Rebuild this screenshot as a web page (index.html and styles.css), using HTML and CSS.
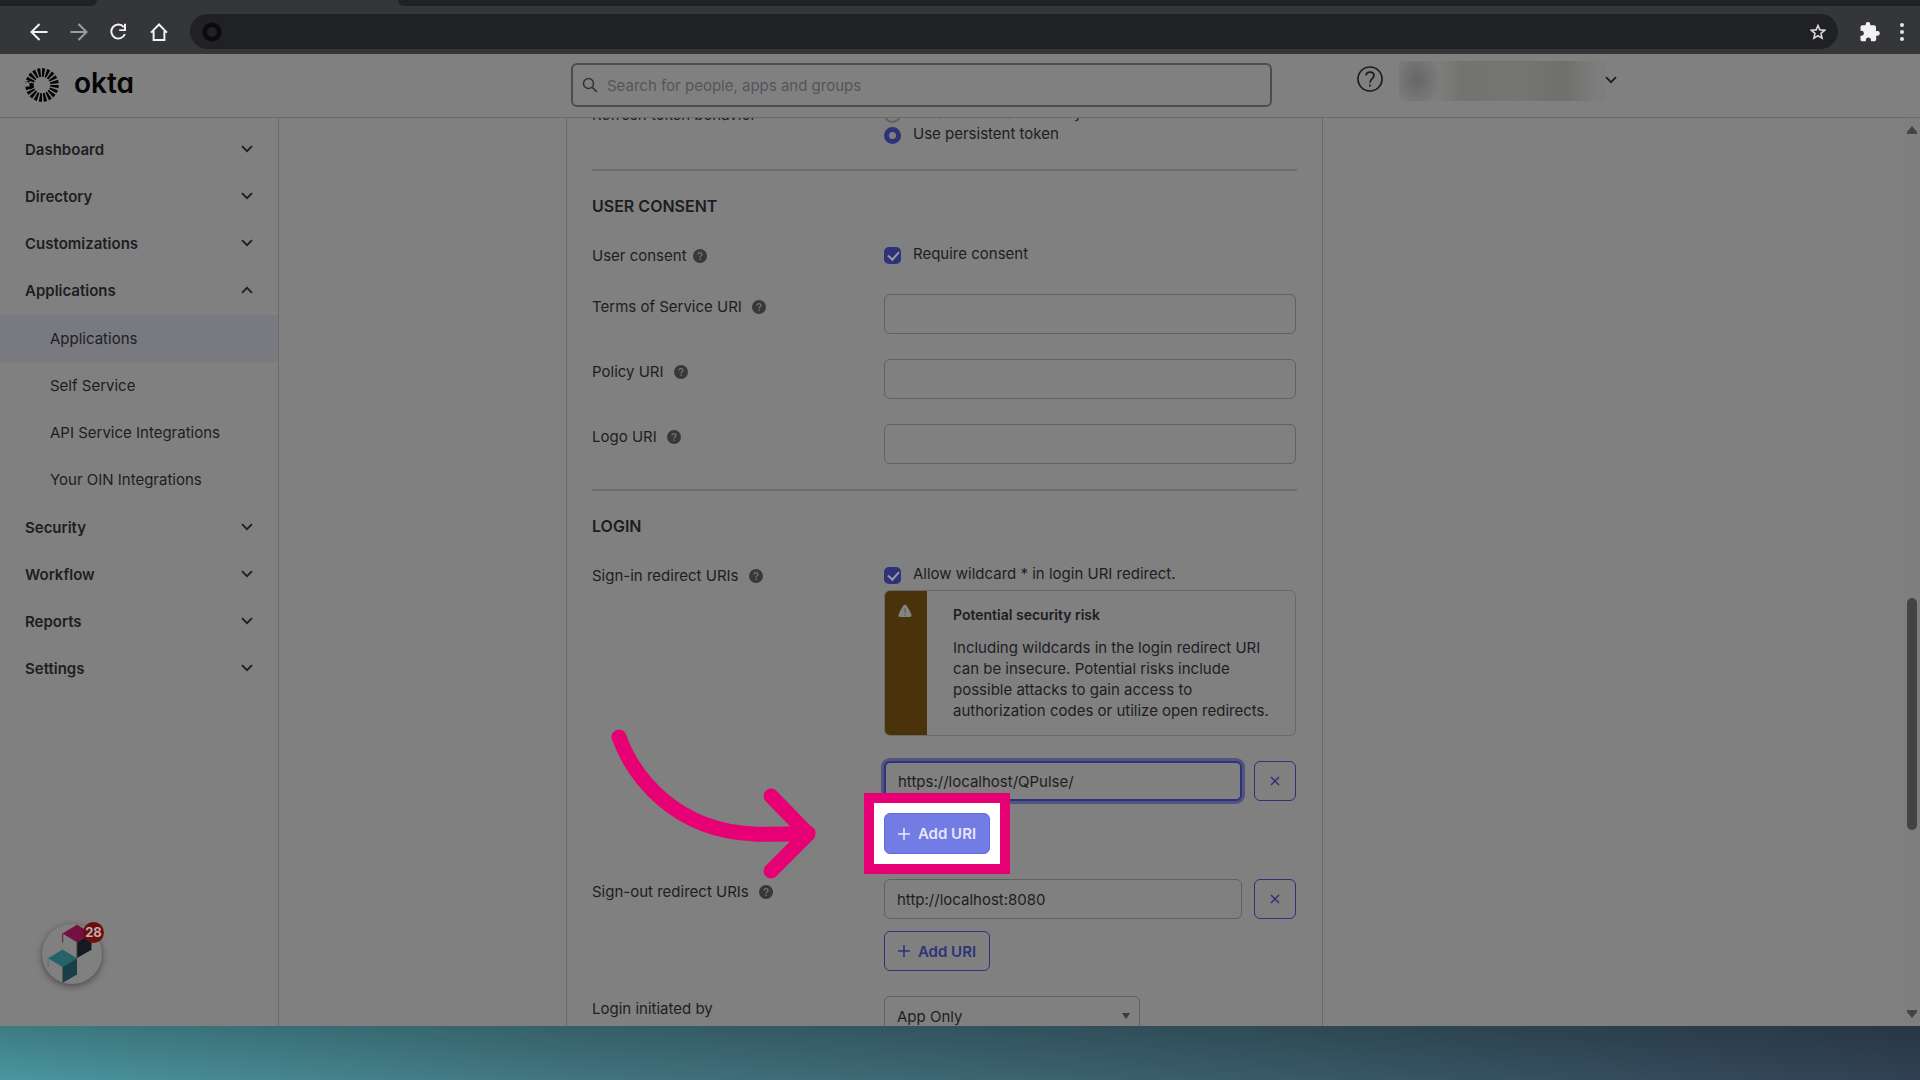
FILE: index.html
```html
<!DOCTYPE html>
<html lang="en">
<head>
<meta charset="utf-8">
<title>Okta Admin - Applications</title>
<link rel="stylesheet" href="styles.css">
</head>
<body>
<svg class="defs" aria-hidden="true">
  <symbol id="chevron" viewBox="0 0 12 8"><path d="M1 1.200l5 5 5-5" fill="none" stroke="currentColor" stroke-width="1.800"/></symbol>
  <symbol id="help" viewBox="0 0 14 14"><circle cx="7" cy="7" r="7" fill="#383838"/><path d="M5 5.500c0-2.600 4-2.600 4 0 0 1.400-1.900 1.300-1.900 2.900M7.100 9.500v1.500" fill="none" stroke="#747474" stroke-width="1.300"/></symbol>
  <symbol id="plus" viewBox="0 0 12 12"><path d="M6 0v12M0 6h12" stroke="currentColor" stroke-width="1.600"/></symbol>
  <symbol id="cross" viewBox="0 0 10 10"><path d="M1 1l8 8M9 1l-8 8" stroke="currentColor" stroke-width="1.500"/></symbol>
</svg>

<div class="chrome">
  <div class="tabstrip"><span class="tab-left"></span><span class="tab-right"></span></div>
  <div class="toolbar">
    <button class="tool" aria-label="Back"><svg width="18" height="18" viewBox="0 0 18 18"><path d="M17.500 9H2M9.500 1L1.500 9l8 8" fill="none" stroke="#f1f1f2" stroke-width="2"/></svg></button>
    <button class="tool" aria-label="Forward"><svg width="18" height="18" viewBox="0 0 18 18"><path d="M.5 9H16M8.500 1l8 8-8 8" fill="none" stroke="#9c9da0" stroke-width="2"/></svg></button>
    <button class="tool" aria-label="Reload"><svg width="18" height="18" viewBox="0 0 18 18"><path d="M13.800 4.200A7 7 0 1 0 14.900 11" fill="none" stroke="#f1f1f2" stroke-width="2"/><path d="M16 .8V8H9.200V6.200H14V.8z" fill="#f1f1f2"/></svg></button>
    <button class="tool" aria-label="Home"><svg width="18" height="18" viewBox="0 0 18 18"><path d="M1 9.600L9 1.500l8 8.100M3.600 8v9h10.800V8" fill="none" stroke="#f1f1f2" stroke-width="2"/></svg></button>
    <div class="omnibox">
      <svg width="20" height="20" viewBox="0 0 20 20"><circle cx="10" cy="10" r="7" fill="none" stroke="#0a0a0b" stroke-width="4"/><circle cx="10" cy="10" r="9.300" fill="none" stroke="#0c0c0d" stroke-width="1.200" stroke-dasharray="1.600 1.200"/></svg>
      <svg width="16" height="16" viewBox="0 0 16 16"><path d="M8 1.500l1.900 4.400 4.700.4-3.600 3.100 1.100 4.800L8 11.700l-4.100 2.500L5 9.400 1.400 6.300l4.700-.4z" fill="none" stroke="#d6d6d8" stroke-width="1.600"/></svg>
    </div>
    <svg class="puzzle" width="20" height="20" viewBox="0 0 20 20"><path d="M17.500 9H16V5.200c0-1-.8-1.900-1.900-1.900h-3.800V2.400a2.300 2.300 0 0 0-4.700 0v.9H2.300C1.300 3.300.5 4.100.5 5.200v3.500h1.300a2.600 2.600 0 0 1 0 5.100H.5v3.600c0 1 .8 1.900 1.800 1.900h3.600v-1.400a2.500 2.500 0 0 1 5 0v1.400h3.400c1 0 1.900-.8 1.900-1.900v-3.700h1.300a2.350 2.350 0 0 0 0-4.700z" fill="#f1f1f2"/></svg>
    <svg width="6" height="20" viewBox="0 0 6 20"><circle cx="3" cy="3" r="2" fill="#e6e6e7"/><circle cx="3" cy="10" r="2" fill="#e6e6e7"/><circle cx="3" cy="17" r="2" fill="#e6e6e7"/></svg>
  </div>
</div>

<div class="app">
  <header class="topbar">
    <a class="brand" href="#">
      <svg width="34" height="36" viewBox="0 0 34 36"><circle cx="17" cy="18" r="12.500" fill="none" stroke="#050505" stroke-width="8.500" stroke-dasharray="2.530 1.397" pathLength="78.540"/></svg>
      <span>okta</span>
    </a>
    <div class="search">
      <svg width="16" height="16" viewBox="0 0 16 16"><circle cx="6.500" cy="6.500" r="5" fill="none" stroke="#333" stroke-width="1.500"/><path d="M10.300 10.300l4.500 4.500" stroke="#333" stroke-width="1.700"/></svg>
      <input type="search" placeholder="Search for people, apps and groups" aria-label="Search for people, apps and groups">
    </div>
    <div class="account">
      <svg class="ask" width="26" height="26" viewBox="0 0 26 26"><circle cx="13" cy="13" r="12" fill="none" stroke="#1c1c1f" stroke-width="1.700"/><path d="M9 9.500c.3-4.600 8-4.600 8 0 0 3-4 3.300-4 7.300M13 18.600v2" fill="none" stroke="#1c1c1f" stroke-width="1.700"/></svg>
      <span class="identity"></span>
      <svg class="chev-sm" width="12" height="8"><use href="#chevron"/></svg>
    </div>
  </header>

  <div class="body">
    <nav class="sidebar">
      <button class="group">Dashboard<svg width="12" height="8"><use href="#chevron"/></svg></button>
      <button class="group">Directory<svg width="12" height="8"><use href="#chevron"/></svg></button>
      <button class="group">Customizations<svg width="12" height="8"><use href="#chevron"/></svg></button>
      <button class="group open">Applications<svg width="12" height="8"><use href="#chevron"/></svg></button>
      <div class="sub">
        <a class="current" href="#">Applications</a>
        <a href="#">Self Service</a>
        <a href="#">API Service Integrations</a>
        <a href="#">Your OIN Integrations</a>
      </div>
      <button class="group">Security<svg width="12" height="8"><use href="#chevron"/></svg></button>
      <button class="group">Workflow<svg width="12" height="8"><use href="#chevron"/></svg></button>
      <button class="group">Reports<svg width="12" height="8"><use href="#chevron"/></svg></button>
      <button class="group">Settings<svg width="12" height="8"><use href="#chevron"/></svg></button>
      <button class="widget" aria-label="Guides, 28 new">
        <svg width="60" height="60" viewBox="0 0 60 60"><path d="M20.500 9.500L35 .8l14.500 8.700L35 18.200z" fill="#730f43"/><path d="M20.700 9.500v9" stroke="#730f43"/><path d="M35 18.200L49.500 9.500v16.300L35 34z" fill="#151a20"/><path d="M35 18v16" stroke="#3c4044"/><path d="M6 34.200l14.500-8.700L35 34.200 20.500 43z" fill="#246469"/><path d="M6.200 34v9" stroke="#4d7577"/><path d="M20.500 43L35 34.200v16.300L20.500 59z" fill="#173f45"/></svg>
        <span class="count">28</span>
      </button>
    </nav>

    <main class="main">
      <form class="card">
        <div class="row clipped">
          <span class="label">Refresh token behavior</span>
          <div class="control">
            <label class="choice"><input type="radio" name="refresh"><span>Rotate token after every use</span></label>
            <label class="choice"><input type="radio" name="refresh" checked><span>Use persistent token</span></label>
          </div>
        </div>

        <hr>
        <h2>USER CONSENT</h2>
        <div class="row consent">
          <span class="label near">User consent <svg width="14" height="14"><use href="#help"/></svg></span>
          <div class="control"><label class="choice"><input type="checkbox" checked><span>Require consent</span></label></div>
        </div>
        <div class="row">
          <label class="label" for="tos">Terms of Service URI <svg width="14" height="14"><use href="#help"/></svg></label>
          <div class="control"><input class="text" id="tos" type="text"></div>
        </div>
        <div class="row">
          <label class="label" for="policy">Policy URI <svg width="14" height="14"><use href="#help"/></svg></label>
          <div class="control"><input class="text" id="policy" type="text"></div>
        </div>
        <div class="row">
          <label class="label" for="logo">Logo URI <svg width="14" height="14"><use href="#help"/></svg></label>
          <div class="control"><input class="text" id="logo" type="text"></div>
        </div>

        <hr>
        <h2>LOGIN</h2>
        <div class="row">
          <span class="label">Sign-in redirect URIs <svg width="14" height="14"><use href="#help"/></svg></span>
          <div class="control">
            <label class="choice"><input type="checkbox" checked><span>Allow wildcard * in login URI redirect.</span></label>
            <div class="warning">
              <div class="strip"><svg width="14" height="14" viewBox="0 0 14 14"><path d="M4.800 2.500C6 .3 8 .3 9.200 2.500c2 3 3.400 5.800 4.300 8.600.3 1-.3 1.900-1.400 1.900H1.900C.8 13 .2 12.100.5 11.100 1.400 8.300 2.800 5.500 4.800 2.500z" fill="#838383"/><path d="M7 4v5M7 10.200v1.500" stroke="#5f563f" stroke-width="1"/></svg></div>
              <div class="message">
                <h3>Potential security risk</h3>
                <p>Including wildcards in the login redirect URI can be insecure. Potential risks include possible attacks to gain access to authorization codes or utilize open redirects.</p>
              </div>
            </div>
            <div class="uri">
              <input class="text focused" type="text" value="https://localhost/QPulse/" aria-label="Sign-in redirect URI">
              <button class="remove" type="button" aria-label="Remove"><svg width="10" height="10"><use href="#cross"/></svg></button>
            </div>
            <div class="spotlight">
              <button class="add primary" type="button"><svg width="12" height="12"><use href="#plus"/></svg>Add URI</button>
              <svg class="arrow" width="210" height="160" viewBox="0 0 210 160"><path d="M15 15C30 56 72 109 150 112Q175 113 204 111M167 74l37 38-37 37" fill="none" stroke="#e60073" stroke-width="15" stroke-linecap="round" stroke-linejoin="round"/></svg>
            </div>
          </div>
        </div>
        <div class="row">
          <span class="label">Sign-out redirect URIs <svg width="14" height="14"><use href="#help"/></svg></span>
          <div class="control">
            <div class="uri">
              <input class="text" type="text" value="http://localhost:8080" aria-label="Sign-out redirect URI">
              <button class="remove" type="button" aria-label="Remove"><svg width="10" height="10"><use href="#cross"/></svg></button>
            </div>
            <button class="add" type="button"><svg width="12" height="12"><use href="#plus"/></svg>Add URI</button>
          </div>
        </div>
        <div class="row">
          <label class="label" for="initiated">Login initiated by</label>
          <div class="control select"><select id="initiated"><option>App Only</option></select></div>
        </div>
      </form>
      <div class="scrollbar">
        <svg class="up" width="10" height="8" viewBox="0 0 10 8"><path d="M5 0l5 6v2H0V6z" fill="#444"/></svg>
        <span class="thumb"></span>
        <svg class="down" width="10" height="8" viewBox="0 0 10 8"><path d="M5 8l5-6V0H0v2z" fill="#444"/></svg>
      </div>
    </main>
  </div>
</div>
<footer class="backdrop"></footer>
</body>
</html>
```
FILE: styles.css
```css
* { box-sizing: border-box; }

body {
  margin: 0;
  height: 100vh;
  display: flex;
  flex-direction: column;
  overflow: hidden;
  background: #808080;
  color: #1d1d22;
  font: 15px/21px Inter, "Liberation Sans", sans-serif;
}

button, input, select { font: inherit; color: inherit; margin: 0; }
button { border: 0; padding: 0; background: none; }
a { color: inherit; text-decoration: none; }
svg { flex: none; display: block; }
.defs { position: absolute; width: 0; height: 0; }

/* Browser frame */
.chrome { flex: none; background: #35363a; }
.tabstrip { display: flex; height: 6px; }
.tab-left { width: 97px; background: #202124; border-bottom-right-radius: 6px; }
.tab-right { flex: 1; margin-left: 301px; background: #202124; border-bottom-left-radius: 8px; }
.toolbar { display: flex; align-items: center; height: 48px; padding: 3px 15px 0 30px; }
.tool { margin-right: 22px; }
.omnibox {
  flex: 1;
  display: flex;
  align-items: center;
  justify-content: space-between;
  height: 35px;
  margin-right: 22px;
  padding: 0 12px;
  border-radius: 18px;
  background: #202124;
}
.puzzle { margin-right: 19px; }

/* Application shell */
.app { flex: 1; min-height: 0; display: flex; flex-direction: column; }
.topbar {
  flex: none;
  display: flex;
  align-items: flex-start;
  height: 64px;
  border-bottom: 1px solid #6b6b6b;
}
.brand {
  display: flex;
  align-items: flex-start;
  gap: 15px;
  width: 571px;
  padding: 13px 0 0 25px;
  color: #050505;
  font-size: 28px;
  line-height: 32px;
  font-weight: 600;
  font-feature-settings: "cv11";
}
.search {
  display: flex;
  align-items: center;
  gap: 9px;
  width: 701px;
  height: 44px;
  margin-top: 9px;
  padding: 0 9px;
  border: 2px solid #4d4d50;
  border-radius: 6px;
}
.search input { flex: 1; border: 0; outline: 0; padding: 0; background: none; }
.search input::placeholder { color: #55555a; opacity: 1; }
.account { display: flex; align-items: center; margin-left: 85px; padding-top: 7px; }
.ask { margin-bottom: 4px; }
.identity {
  width: 206px;
  height: 40px;
  margin-left: 16px;
  background:
    radial-gradient(ellipse 24px 28px at 18px 18px, #666, transparent),
    linear-gradient(90deg, transparent 20%, #73736f 30%, #757574 60%, #6f6f6c 80%, transparent 96%),
    #7d7d7d;
}
.chev-sm { margin-bottom: 2px; }

.body { flex: 1; min-height: 0; display: flex; }
.sidebar {
  position: relative;
  flex: none;
  width: 279px;
  padding-top: 8px;
  border-right: 1px solid #6b6b6b;
}
.group {
  display: flex;
  align-items: center;
  justify-content: space-between;
  width: 100%;
  height: 47px;
  padding: 0 25px;
  font-weight: 600;
}
.group svg { margin-bottom: 2px; }
.group.open svg { transform: rotate(180deg); }
.sub { padding: 1px 0; }
.sub a { display: block; padding: 0 50px; line-height: 47px; }
.sub .current { background: #797980; }

.widget {
  position: absolute;
  left: 42px;
  bottom: 42px;
  width: 60px;
  height: 60px;
  border-radius: 50%;
  box-shadow: 0 2px 7px rgba(0, 0, 0, .45);
}
.count {
  position: absolute;
  top: -2px;
  right: -2px;
  width: 21px;
  height: 21px;
  border-radius: 50%;
  background: #6e0e0c;
  color: #b9aeae;
  font-size: 13px;
  font-weight: 700;
  text-align: center;
}

/* Settings form */
.main { flex: 1; min-width: 0; display: flex; overflow: hidden; }
.card {
  width: 757px;
  margin-left: 287px;
  padding: 0 25px;
  border: solid #696969;
  border-width: 0 1px;
}
.row { display: flex; padding-bottom: 25px; }
.consent { padding-bottom: 28px; }
.label { display: flex; align-items: center; gap: 10px; width: 292px; height: 21px; flex: none; margin-top: 2px; }
.label.near { gap: 6px; }
.control { width: 412px; }
.choice { display: flex; align-items: center; gap: 12px; height: 21px; }
.choice span { margin-bottom: 1px; }
.choice input {
  appearance: none;
  width: 17px;
  height: 17px;
  margin-top: 4px;
  border-radius: 5px;
  background: #2d3279;
}
.choice input[type="radio"] { border: 2px solid #606060; border-radius: 50%; background: none; }
.choice input[type="radio"]:checked { border: 5px solid #2d3279; }
.choice input[type="checkbox"]::before {
  content: "";
  display: block;
  width: 5px;
  height: 9px;
  margin: 2px 0 0 6px;
  border: solid #9a9aa5;
  border-width: 0 2px 2px 0;
  transform: rotate(42deg);
}
.clipped { margin-top: -16px; }
hr { height: 2px; margin: 0; border: 0; background: #6b6b6b; }
h2 { margin: 0; padding: 25px 0 26px; font-size: 16px; line-height: 21px; font-weight: 600; }
h3 { margin: 0; font-size: 14px; line-height: 21px; font-weight: 600; }
p { margin: 12px 0 0; }
.text, select {
  width: 100%;
  height: 40px;
  padding: 0 12px;
  border: 1px solid #606060;
  border-radius: 6px;
  background: #808080;
  outline: 0;
}
.warning {
  display: flex;
  height: 146px;
  margin: 6px 0 25px;
  border: 1px solid #696969;
  border-radius: 6px;
  overflow: hidden;
}
.strip { flex: none; width: 42px; padding: 13px; background: #4a330a; }
.message { padding: 13px 20px 0 26px; }
.uri { display: flex; gap: 12px; margin-bottom: 12px; }
.uri .text { flex: 1; }
.text.focused { border: 2px solid #2d3279; box-shadow: 0 0 0 3px #50547f; }
.remove, .add {
  display: flex;
  align-items: center;
  justify-content: center;
  height: 40px;
  border: 1px solid #2d3279;
  border-radius: 6px;
  color: #2d3279;
}
.remove { width: 42px; }
.add { gap: 8px; width: 106px; font-weight: 600; }
.primary { height: 41px; border-color: #626ae0; background: #737be5; color: #e6e7fb; }

/* Guide highlight drawn round the button */
.spotlight { position: relative; width: 106px; z-index: 1; isolation: isolate; }
.spotlight::before {
  content: "";
  position: absolute;
  z-index: -1;
  inset: -20px;
  border: 10px solid #e60073;
  background: #fff;
}
.arrow { position: absolute; right: calc(100% + 70px); top: -91px; overflow: visible; }

.select { position: relative; }
.select select { width: 256px; appearance: none; }
.select::after {
  content: "";
  position: absolute;
  left: 238px;
  top: 17px;
  border: solid transparent;
  border-width: 6px 4px 0;
  border-top-color: #3a3a3a;
}

/* Scroll track */
.scrollbar {
  display: grid;
  grid-template-rows: auto 72fr auto 28fr auto;
  justify-items: center;
  width: 16px;
  margin-left: auto;
  padding: 8px 0;
  background: #7e7e7e;
}
.thumb { grid-row: 3; width: 10px; height: 232px; border-radius: 5px; background: #444; }
.down { grid-row: 5; }

.backdrop {
  flex: none;
  height: 54px;
  background:
    linear-gradient(rgba(0, 0, 0, .18), transparent),
    linear-gradient(90deg, #4a969f, #41747f 30%, #395b69 65%, #314153);
}
```
